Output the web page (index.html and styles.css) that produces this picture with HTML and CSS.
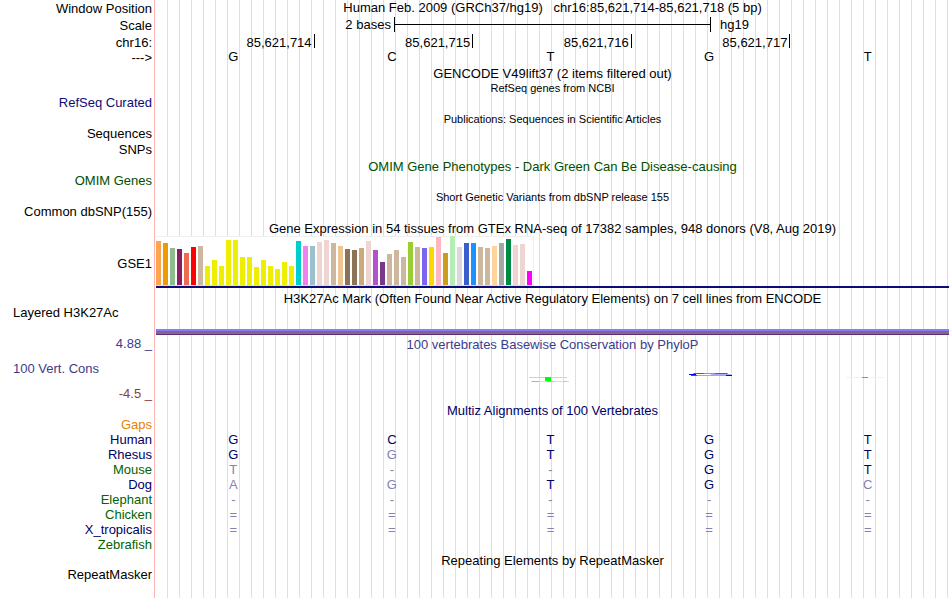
FILE: index.html
```html
<!DOCTYPE html>
<html lang="en">
<head>
  <meta charset="UTF-8">
  <meta name="viewport" content="width=device-width, initial-scale=1.0">
  <title>Human chr16:85,621,714-85,621,718</title>
  <link rel="stylesheet" href="styles.css">
</head>
<body>
  <main class="browser">

    <!-- Ruler -->
    <div class="row ruler">
      <div class="label">Window Position</div>
      <div class="title position">Human Feb. 2009 (GRCh37/hg19) &nbsp; chr16:85,621,714-85,621,718 (5 bp)</div>
    </div>
    <div class="row ruler">
      <div class="label">Scale</div>
      <div class="scale">
        <span class="scale-size">2 bases</span>
        <span class="scale-bar"></span>
        <span class="scale-db">hg19</span>
      </div>
    </div>
    <div class="row ruler">
      <div class="label">chr16:</div>
      <div class="ticks">
        <span>85,621,714</span>
        <span>85,621,715</span>
        <span>85,621,716</span>
        <span>85,621,717</span>
      </div>
    </div>
    <div class="row">
      <div class="label">---&gt;</div>
      <div class="bases">
        <span>G</span>
        <span>C</span>
        <span>T</span>
        <span>G</span>
        <span>T</span>
      </div>
    </div>

    <!-- Genes -->
    <div class="row"><div class="title">GENCODE V49lift37 (2 items filtered out)</div></div>
    <div class="row"><div class="title note">RefSeq genes from NCBI</div></div>
    <div class="row"><div class="label blue">RefSeq Curated</div></div>
    <div class="row tall"><div class="title note">Publications: Sequences in Scientific Articles</div></div>
    <div class="row"><div class="label">Sequences</div></div>
    <div class="row tall"><div class="label">SNPs</div></div>
    <div class="row tall"><div class="title green">OMIM Gene Phenotypes - Dark Green Can Be Disease-causing</div></div>
    <div class="row"><div class="label green">OMIM Genes</div></div>
    <div class="row tall"><div class="title note">Short Genetic Variants from dbSNP release 155</div></div>
    <div class="row"><div class="label">Common dbSNP(155)</div></div>

    <!-- GTEx -->
    <div class="row tall"><div class="title">Gene Expression in 54 tissues from GTEx RNA-seq of 17382 samples, 948 donors (V8, Aug 2019)</div></div>
    <div class="row gtex">
      <div class="label">GSE1</div>
      <div class="expression">
        <svg class="chart" width="378" height="50" viewBox="0 0 378 50" shape-rendering="crispEdges" role="img" aria-label="GSE1 expression by tissue">
          <rect x="0" y="0" width="378" height="50" fill="#f0f0f0"/>
          <rect x="0" y="1" width="377" height="48" fill="#ffffff"/>
          <rect x="0" y="49" width="378" height="1" fill="#dcdcdc"/>
          <rect x="0" y="5" width="5" height="44" fill="#ffa54f"/>
          <rect x="7" y="7" width="5" height="42" fill="#ee9a00"/>
          <rect x="14" y="12" width="5" height="37" fill="#8fbc8f"/>
          <rect x="21" y="13" width="5" height="36" fill="#8b1c62"/>
          <rect x="28" y="17" width="5" height="32" fill="#ee6a50"/>
          <rect x="35" y="11" width="5" height="38" fill="#ff0000"/>
          <rect x="42" y="10" width="5" height="39" fill="#cdb79e"/>
          <!-- brain -->
          <g fill="#eeee00">
            <rect x="49" y="30" width="5" height="19"/>
            <rect x="56" y="24" width="5" height="25"/>
            <rect x="63" y="30" width="5" height="19"/>
            <rect x="70" y="4" width="5" height="45"/>
            <rect x="77" y="4" width="5" height="45"/>
            <rect x="84" y="21" width="5" height="28"/>
            <rect x="91" y="21" width="5" height="28"/>
            <rect x="98" y="31" width="5" height="18"/>
            <rect x="105" y="24" width="5" height="25"/>
            <rect x="112" y="30" width="5" height="19"/>
            <rect x="119" y="33" width="5" height="16"/>
            <rect x="126" y="26" width="5" height="23"/>
            <rect x="133" y="30" width="5" height="19"/>
          </g>
          <rect x="140" y="5" width="5" height="44" fill="#00cdcd"/>
          <rect x="147" y="10" width="5" height="39" fill="#ee82ee"/>
          <rect x="154" y="10" width="5" height="39" fill="#9ac0cd"/>
          <rect x="161" y="6" width="5" height="43" fill="#eed5d2"/>
          <rect x="168" y="4" width="5" height="45" fill="#eed5d2"/>
          <rect x="175" y="7" width="5" height="42" fill="#cdb79e"/>
          <rect x="182" y="10" width="5" height="39" fill="#eec591"/>
          <rect x="189" y="13" width="5" height="36" fill="#8b7355"/>
          <rect x="196" y="14" width="5" height="35" fill="#8b7355"/>
          <rect x="203" y="12" width="5" height="37" fill="#cdaa7d"/>
          <rect x="210" y="5" width="5" height="44" fill="#eed5d2"/>
          <rect x="217" y="14" width="5" height="35" fill="#b452cd"/>
          <rect x="224" y="26" width="5" height="23" fill="#7a378b"/>
          <rect x="231" y="18" width="5" height="31" fill="#cdb79e"/>
          <rect x="238" y="14" width="5" height="35" fill="#cdb79e"/>
          <rect x="245" y="21" width="5" height="28" fill="#cdb79e"/>
          <rect x="252" y="6" width="5" height="43" fill="#9acd32"/>
          <rect x="259" y="11" width="5" height="38" fill="#cdb79e"/>
          <rect x="266" y="12" width="5" height="37" fill="#7a67ee"/>
          <rect x="273" y="11" width="5" height="38" fill="#ffd700"/>
          <rect x="280" y="1" width="5" height="48" fill="#ffb6c1"/>
          <rect x="287" y="17" width="5" height="32" fill="#cd9b1d"/>
          <rect x="294" y="0" width="5" height="49" fill="#b4eeb4"/>
          <rect x="301" y="11" width="5" height="38" fill="#d9d9d9"/>
          <rect x="308" y="7" width="5" height="42" fill="#3a5fcd"/>
          <rect x="315" y="7" width="5" height="42" fill="#1e90ff"/>
          <rect x="322" y="11" width="5" height="38" fill="#cdb79e"/>
          <rect x="329" y="12" width="5" height="37" fill="#cdb79e"/>
          <rect x="336" y="10" width="5" height="39" fill="#ffd39b"/>
          <rect x="343" y="7" width="5" height="42" fill="#a6a6a6"/>
          <rect x="350" y="3" width="5" height="46" fill="#008b45"/>
          <rect x="357" y="9" width="5" height="40" fill="#eed5d2"/>
          <rect x="364" y="8" width="5" height="41" fill="#eed5d2"/>
          <rect x="371" y="35" width="5" height="14" fill="#ff00ff"/>
        </svg>
      </div>
    </div>

    <!-- H3K27Ac -->
    <div class="row histone-title"><div class="title">H3K27Ac Mark (Often Found Near Active Regulatory Elements) on 7 cell lines from ENCODE</div></div>
    <div class="row"><div class="label left">Layered H3K27Ac</div></div>
    <div class="row histone"><div class="signal"></div></div>

    <!-- Conservation -->
    <div class="row conservation">
      <div class="axis">
        <span class="max">4.88 _</span>
        <span class="name">100 Vert. Cons</span>
        <span class="min">-4.5 _</span>
      </div>
      <div class="phylop">
        <div class="title slate">100 vertebrates Basewise Conservation by PhyloP</div>
        <div class="logos">
          <span></span>
          <span></span>
          <svg width="44" height="14" viewBox="0 0 44 14" shape-rendering="crispEdges" aria-hidden="true">
            <rect x="1" y="6" width="38" height="1" fill="#96fa96"/>
            <rect x="3" y="10" width="38" height="1" fill="#e6deb4"/>
            <rect x="4" y="10" width="7" height="1" fill="#c3b45a"/>
            <rect x="19" y="10" width="7" height="1" fill="#cdc07a"/>
            <rect x="35" y="10" width="4" height="1" fill="#d2c88c"/>
            <rect x="17" y="6" width="6" height="4" fill="#00ff00"/>
          </svg>
          <svg width="50" height="14" viewBox="-6 0 50 14" shape-rendering="crispEdges" aria-hidden="true">
            <rect x="6" y="3" width="32" height="2" fill="#ffffff"/>
            <rect x="4" y="2" width="35" height="1" fill="#8c8cff"/>
            <rect x="5" y="2" width="10" height="1" fill="#5050f5"/>
            <rect x="26" y="2" width="12" height="1" fill="#5050f5"/>
            <rect x="22" y="3" width="20" height="1" fill="#aaaaff"/>
            <rect x="0" y="3" width="7" height="1" fill="#0000ff"/>
            <rect x="3" y="4" width="38" height="1" fill="#a0a0ff"/>
            <rect x="2" y="4" width="6" height="1" fill="#3c3cff"/>
            <rect x="37" y="4" width="6" height="1" fill="#0000ff"/>
          </svg>
          <svg width="44" height="14" viewBox="0 0 44 14" shape-rendering="crispEdges" aria-hidden="true">
            <rect x="2" y="6" width="38" height="1" fill="#e6fae6"/>
            <rect x="18" y="6" width="6" height="1" fill="#00f000"/>
          </svg>
        </div>
      </div>
    </div>

    <!-- Multiz -->
    <div class="row"><div class="title navy" id="multiz">Multiz Alignments of 100 Vertebrates</div></div>
    <table class="alignment" aria-labelledby="multiz">
      <tr><th scope="row" class="orange">Gaps</th><td></td><td></td><td></td><td></td><td></td></tr>
      <tr><th scope="row" class="navy">Human</th><td>G</td><td>C</td><td>T</td><td>G</td><td>T</td></tr>
      <tr><th scope="row" class="navy">Rhesus</th><td>G</td><td class="diff">G</td><td>T</td><td>G</td><td>T</td></tr>
      <tr><th scope="row" class="forest">Mouse</th><td class="diff">T</td><td class="diff">-</td><td class="diff">-</td><td>G</td><td>T</td></tr>
      <tr><th scope="row" class="navy">Dog</th><td class="diff">A</td><td class="diff">G</td><td>T</td><td>G</td><td class="diff">C</td></tr>
      <tr class="diff"><th scope="row" class="forest">Elephant</th><td>-</td><td>-</td><td>-</td><td>-</td><td>-</td></tr>
      <tr class="diff"><th scope="row" class="forest">Chicken</th><td>=</td><td>=</td><td>=</td><td>=</td><td>=</td></tr>
      <tr class="diff"><th scope="row" class="navy">X_tropicalis</th><td>=</td><td>=</td><td>=</td><td>=</td><td>=</td></tr>
      <tr><th scope="row" class="forest">Zebrafish</th><td></td><td></td><td></td><td></td><td></td></tr>
    </table>

    <!-- Repeats -->
    <div class="row"><div class="title">Repeating Elements by RepeatMasker</div></div>
    <div class="row"><div class="label">RepeatMasker</div></div>
  </main>
</body>
</html>
```
FILE: styles.css
```css
body {
  margin: 0;
  background-color: white;
  color: black;
  font-family: "Liberation Sans", Arial, Helvetica, sans-serif;
  font-size: 13px;
  line-height: 15px;
}

/* white label column, red divider, then a guide line every 12px */
.browser {
  box-sizing: border-box;
  min-height: 100vh;
  padding-right: 1px;
  background-image:
    linear-gradient(white, white),
    linear-gradient(#ffb4b4, #ffb4b4),
    linear-gradient(white, white),
    linear-gradient(to right, transparent 11px, #dcdcfa 11px);
  background-position: 0 0, 154px 0, 155px 0, 156px 0;
  background-size: 154px 100%, 1px 100%, 1px 100%, 12px 100%;
  background-repeat: no-repeat, no-repeat, no-repeat, repeat-x;
}

.row {
  display: grid;
  grid-template-columns: 156px minmax(0, 1fr);
  min-height: 15px;
}

.row.tall {
  min-height: 16px;
}

.row.ruler {
  min-height: 17px;
}

.label {
  grid-column: 1;
  align-self: center;
  padding: 0 4px 2px 0;
  line-height: 13px;
  text-align: right;
  white-space: nowrap;
}

.ruler .label {
  padding-bottom: 0;
}

.label.left {
  padding-left: 13px;
  text-align: left;
}

.title {
  grid-column: 2;
  align-self: center;
  text-align: center;
  white-space: nowrap;
}

.title.position {
  align-self: start;
}

.title.note {
  font-size: 11px;
}

/* Ruler */
.scale {
  display: grid;
  grid-template-columns: 30% 40% 30%;
}

.scale-size {
  padding-right: 3px;
  text-align: right;
}

.scale-bar {
  height: 15px;
  border-left: 1px solid black;
  border-right: 1px solid black;
  background: linear-gradient(black, black) no-repeat center / 100% 1px;
}

.scale-db {
  padding-left: 9px;
}

.ticks,
.bases,
.logos {
  display: grid;
  grid-template-columns: repeat(5, 1fr);
}

.ticks span {
  height: 14px;
  padding-right: 2px;
  border-right: 1px solid black;
  line-height: 17px;
  text-align: right;
}

.bases span {
  padding-right: 4px;
  line-height: 11px;
  text-align: center;
}

/* GTEx */
.gtex {
  min-height: 52px;
}

.gtex .label {
  padding-top: 4px;
}

.expression {
  border-bottom: 2px solid #0c0c78;
}

.chart {
  display: block;
}

/* H3K27Ac */
.histone-title {
  padding-top: 3px;
}

.histone {
  padding: 8px 0 2px;
  min-height: 6px;
}

.signal {
  grid-column: 2;
  box-sizing: border-box;
  height: 6px;
  border-top: 2px solid #8080ff;
  border-bottom: 1px solid #5f2d78;
  background-color: #82648c;
}

/* Conservation */
.axis {
  display: flex;
  flex-direction: column;
  justify-content: space-between;
  padding: 0 4px 3px 0;
  line-height: 13px;
  text-align: right;
}

.axis .max,
.axis .name {
  color: #3c3c8c;
}

.axis .name {
  padding-left: 13px;
  text-align: left;
}

.axis .min {
  color: #8c3c3c;
}

.conservation {
  min-height: 66px;
}

.logos {
  padding: 19px 4px 0 0;
  justify-items: center;
}

/* Multiz */
.alignment {
  width: 100%;
  table-layout: fixed;
  border-collapse: collapse;
  color: #000064;
  line-height: 13px;
}

.alignment th,
.alignment td {
  height: 13px;
  padding: 0 4px 2px 0;
  text-align: center;
}

.alignment th {
  width: 152px;
  font-weight: normal;
  text-align: right;
}

.alignment .diff,
.alignment .diff td {
  color: #8282b4;
}

.blue {
  color: #0c0c78;
}

.green {
  color: #005000;
}

.slate {
  color: #3c3c8c;
}

.alignment .navy,
.navy {
  color: #000064;
}

.alignment .forest {
  color: #006400;
}

.alignment .orange {
  color: #e68200;
}
```
